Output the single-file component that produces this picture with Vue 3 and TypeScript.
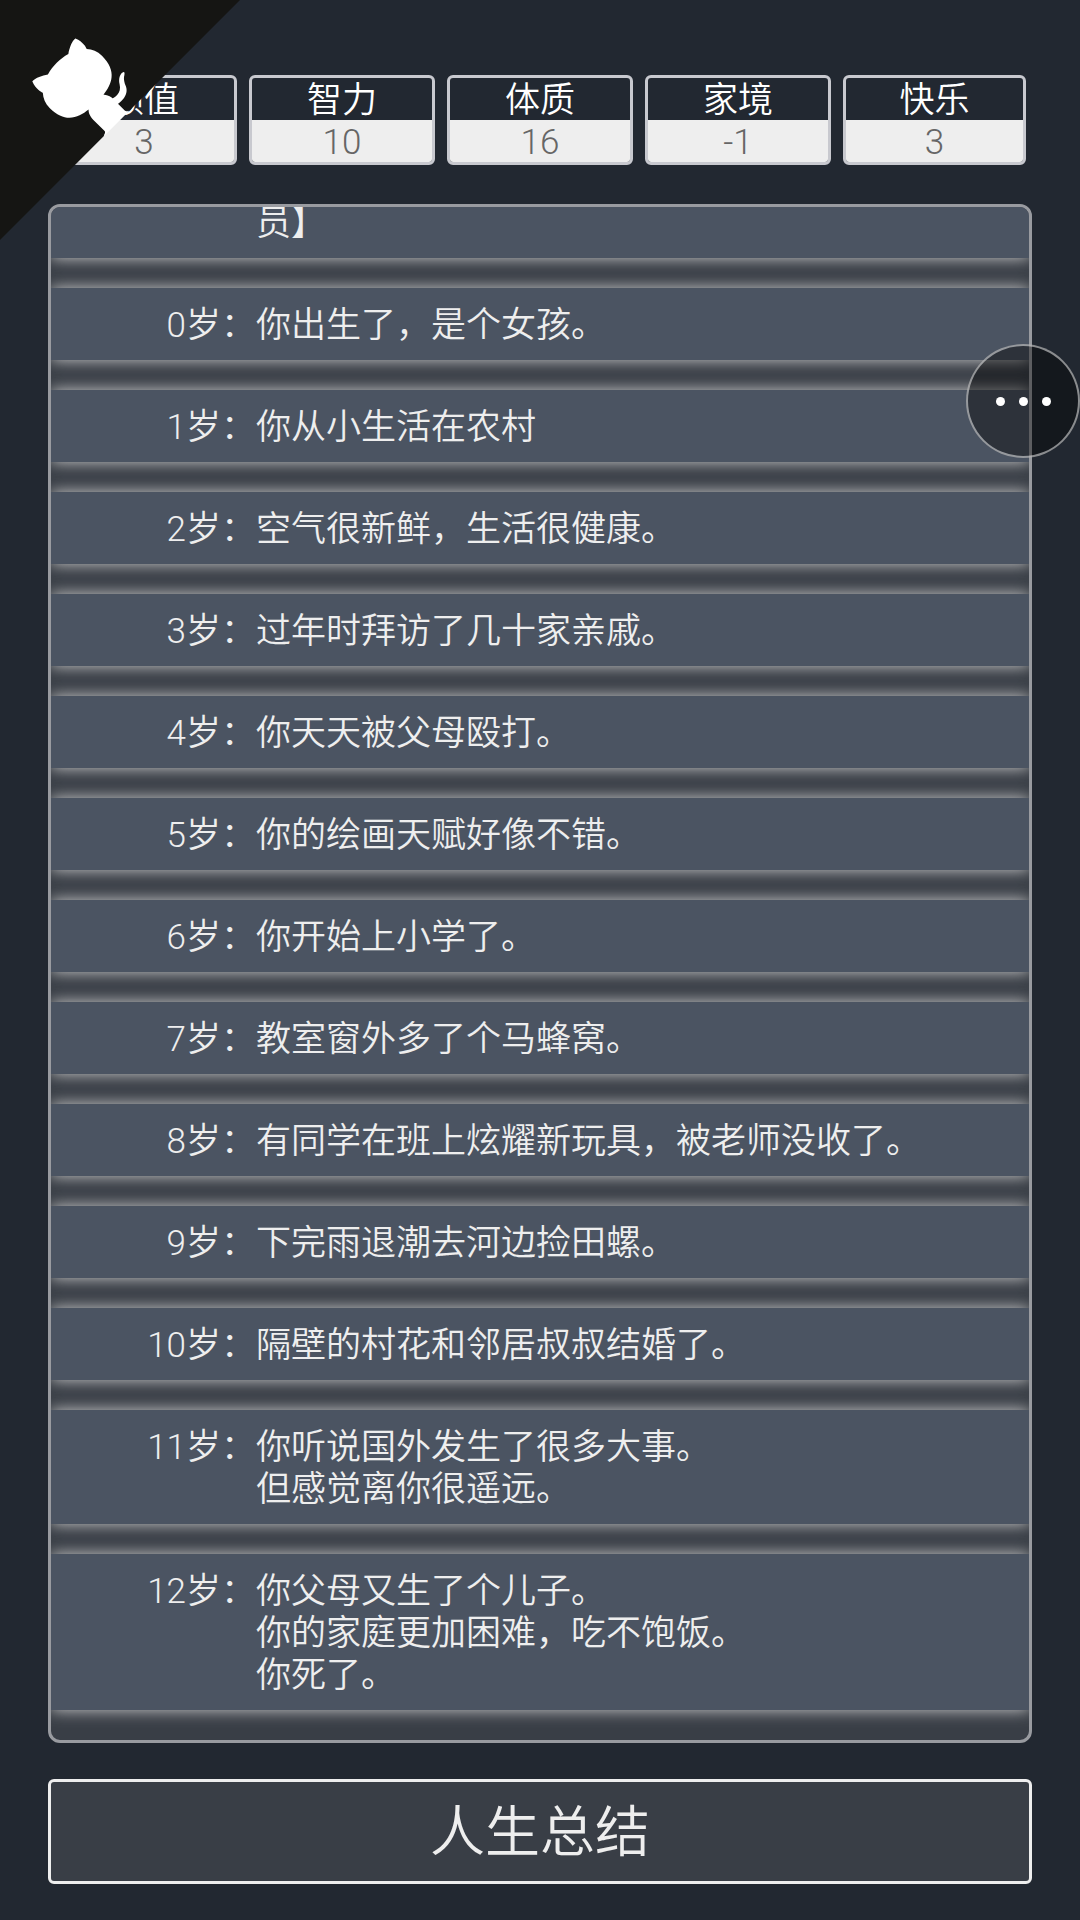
<script setup lang="ts">
interface Stat {
  label: string
  value: number
}

interface LifeEvent {
  age: string
  lines: string[]
}

const stats: Stat[] = [
  { label: '颜值', value: 3 },
  { label: '智力', value: 10 },
  { label: '体质', value: 16 },
  { label: '家境', value: -1 },
  { label: '快乐', value: 3 },
]

const events: LifeEvent[] = [
  { age: '', lines: ['员】'] },
  { age: '0岁：', lines: ['你出生了，是个女孩。'] },
  { age: '1岁：', lines: ['你从小生活在农村'] },
  { age: '2岁：', lines: ['空气很新鲜，生活很健康。'] },
  { age: '3岁：', lines: ['过年时拜访了几十家亲戚。'] },
  { age: '4岁：', lines: ['你天天被父母殴打。'] },
  { age: '5岁：', lines: ['你的绘画天赋好像不错。'] },
  { age: '6岁：', lines: ['你开始上小学了。'] },
  { age: '7岁：', lines: ['教室窗外多了个马蜂窝。'] },
  { age: '8岁：', lines: ['有同学在班上炫耀新玩具，被老师没收了。'] },
  { age: '9岁：', lines: ['下完雨退潮去河边捡田螺。'] },
  { age: '10岁：', lines: ['隔壁的村花和邻居叔叔结婚了。'] },
  { age: '11岁：', lines: ['你听说国外发生了很多大事。', '但感觉离你很遥远。'] },
  { age: '12岁：', lines: ['你父母又生了个儿子。', '你的家庭更加困难，吃不饱饭。', '你死了。'] },
]
</script>

<template>
  <div class="page" lang="zh-CN">
    <a class="corner" href="#" aria-label="GitHub">
      <svg viewBox="0 0 250 250" aria-hidden="true">
        <path class="corner-bg" d="M0,0 L115,115 L130,115 L142,142 L250,250 L250,0 Z" />
        <path
          class="corner-cat"
          d="M128.3,109.0 C113.8,99.7 119.0,89.6 119.0,89.6 C122.0,82.7 120.5,78.6 120.5,78.6 C119.2,72.0 123.4,76.3 123.4,76.3 C127.3,80.9 125.5,87.3 125.5,87.3 C122.9,97.6 130.6,101.9 134.4,103.2"
        />
        <path
          class="corner-cat"
          d="M115.0,115.0 C114.9,115.1 118.7,116.5 119.8,115.4 L133.7,101.6 C136.9,99.2 139.9,98.4 142.2,98.6 C133.8,88.0 127.5,74.4 143.8,58.0 C148.5,53.4 154.0,51.2 159.7,51.0 C160.3,49.4 163.2,43.6 171.4,40.1 C171.4,40.1 176.1,42.5 178.8,56.2 C183.1,58.6 187.2,61.8 190.9,65.4 C194.5,69.0 197.7,73.2 200.1,77.6 C213.8,80.2 216.3,84.9 216.3,84.9 C212.7,93.1 206.9,96.0 205.4,96.6 C205.1,102.4 203.0,107.8 198.3,112.5 C181.9,128.9 168.3,122.5 157.7,114.1 C157.9,116.9 156.7,120.9 152.7,124.9 L141.0,136.5 C139.8,137.7 141.6,141.9 141.8,141.8 Z"
        />
      </svg>
    </a>

    <ul class="stats">
      <li v-for="stat in stats" :key="stat.label" class="stat">
        <span class="stat-label">{{ stat.label }}</span>
        <span class="stat-value">{{ stat.value }}</span>
      </li>
    </ul>

    <ul class="life">
      <li v-for="event in events" :key="event.age" class="event">
        <span class="age">{{ event.age }}</span>
        <div class="lines">
          <p v-for="line in event.lines" :key="line">{{ line }}</p>
        </div>
      </li>
    </ul>

    <button class="summary" type="button">人生总结</button>

    <button class="menu" type="button" aria-label="更多">
      <i></i><i></i><i></i>
    </button>
  </div>
</template>

<style>
body {
  background: #222831;
}
</style>

<style scoped>
.page {
  position: relative;
  display: flex;
  flex-direction: column;
  box-sizing: border-box;
  height: 100vh;
  padding: 75px 48px 36px;
  overflow: hidden;
  background: #222831;
  color: #eeeeee;
  font-family: Roboto, "Noto Sans CJK SC", sans-serif;
  font-size: 35px;
  font-weight: 350;
  line-height: 42px;
}

.corner {
  position: absolute;
  top: 0;
  left: 0;
}

.corner svg {
  display: block;
  width: 240px;
  height: 240px;
  transform: scaleX(-1);
}

.corner-bg {
  fill: #151513;
}

.corner-cat {
  fill: #ffffff;
}

.stats {
  display: grid;
  grid-template-columns: repeat(4, 62fr) 61fr;
  gap: 12px;
  margin: 0 6px 39px 3px;
  padding: 0;
  list-style: none;
  text-align: center;
}

.stat {
  display: flex;
  flex-direction: column;
  overflow: hidden;
  border: 3px solid #c8c9cf;
  border-radius: 6px;
}

.stat-label,
.stat-value {
  padding-top: 4px;
  line-height: 38px;
}

.stat-label {
  color: #ffffff;
}

.stat-value {
  background: #eeeeee;
  color: #666666;
  font-weight: 300;
}

.life {
  display: flex;
  flex: 1;
  flex-direction: column;
  gap: 30px;
  justify-content: flex-end;
  min-height: 0;
  margin: 0 0 36px;
  padding: 0 0 30px;
  overflow: hidden;
  border: 3px solid #999ba0;
  border-radius: 12px;
  background: #393e46;
  list-style: none;
}

.event {
  display: flex;
  flex-shrink: 0;
  padding: 17px 0 13px;
  background: #4b5462;
  box-shadow: 0 0 15px #cccccc;
}

.age {
  flex: none;
  width: 205px;
  text-align: right;
}

.lines {
  flex: 1;
}

.lines p {
  margin: 0;
}

.summary {
  height: 105px;
  border: 3px solid #eeeeee;
  border-radius: 6px;
  background: #393e46;
  color: #eeeeee;
  font-family: inherit;
  font-size: 55px;
  font-weight: 350;
  line-height: 60px;
}

.menu {
  position: absolute;
  top: 344px;
  right: 0;
  display: flex;
  gap: 14px;
  align-items: center;
  justify-content: center;
  width: 114px;
  height: 114px;
  padding: 0;
  border: 2px solid rgba(255, 255, 255, 0.5);
  border-radius: 50%;
  background: rgba(0, 0, 0, 0.4);
}

.menu i {
  width: 9px;
  height: 9px;
  border-radius: 50%;
  background: #ffffff;
}
</style>
